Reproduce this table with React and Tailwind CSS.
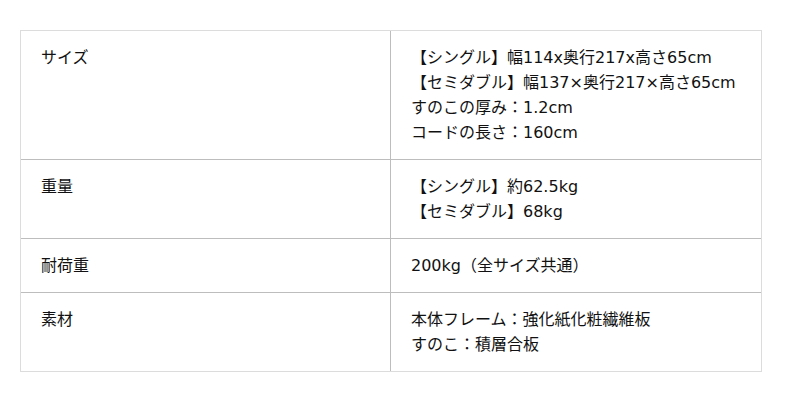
import React from "react";

const ROWS = [
  {
    label: "サイズ",
    lines: [
      "【シングル】幅114x奥行217x高さ65cm",
      "【セミダブル】幅137×奥行217×高さ65cm",
      "すのこの厚み：1.2cm",
      "コードの長さ：160cm",
    ],
  },
  { label: "重量", lines: ["【シングル】約62.5kg", "【セミダブル】68kg"] },
  { label: "耐荷重", lines: ["200kg（全サイズ共通）"] },
  { label: "素材", lines: ["本体フレーム：強化紙化粧繊維板", "すのこ：積層合板"] },
];

export default function App() {
  return (
    <div
      className="min-h-screen bg-white pt-[30px] pl-[20px] text-[16px] leading-[25px] text-[#111]"
      style={{ fontFamily: '"DejaVu Sans", "Noto Sans CJK JP", sans-serif' }}
    >
      <div className="w-[742px] border border-[#dcdcdc]">
        {ROWS.map((row, i) => (
          <div
            key={row.label}
            className={`grid grid-cols-[369px_1fr] ${i > 0 ? "border-t border-[#bdbdbd]" : ""}`}
          >
            <div className="px-5 py-[14px]">{row.label}</div>
            <div className="border-l border-[#bdbdbd] px-5 py-[14px]">
              {row.lines.map((line) => (
                <div key={line}>{line}</div>
              ))}
            </div>
          </div>
        ))}
      </div>
    </div>
  );
}
